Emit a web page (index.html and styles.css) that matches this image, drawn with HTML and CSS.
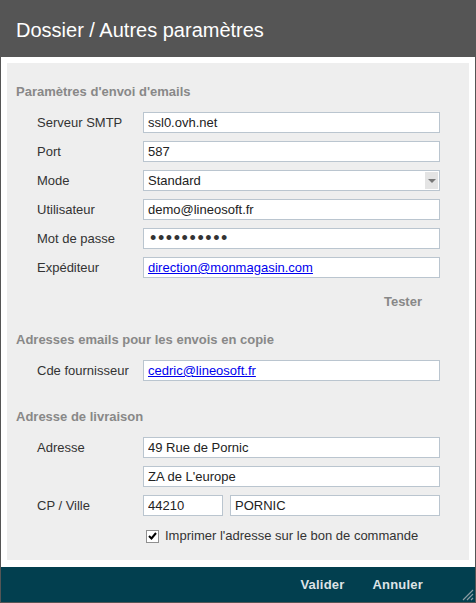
FILE: index.html
```html
<!DOCTYPE html>
<html lang="fr">
<head>
    <meta charset="UTF-8">
    <meta name="viewport" content="width=device-width, initial-scale=1.0">
    <title>Dossier / Autres paramètres</title>
    <link rel="stylesheet" href="styles.css">
</head>
<body>
    <div class="window">
        <h1 class="title">Dossier / Autres paramètres</h1>

        <div class="content">
            <div class="panel">
                <h2 class="section first">Paramètres d'envoi d'emails</h2>
                <div class="rows">
                    <div class="row">
                        <label>Serveur SMTP</label>
                        <input type="text" value="ssl0.ovh.net">
                    </div>
                    <div class="row">
                        <label>Port</label>
                        <input type="text" value="587">
                    </div>
                    <div class="row">
                        <label>Mode</label>
                        <div class="select-wrap">
                            <select>
                                <option>Standard</option>
                                <option>SSL</option>
                                <option>TLS</option>
                            </select>
                            <span class="arrow"></span>
                        </div>
                    </div>
                    <div class="row">
                        <label>Utilisateur</label>
                        <input type="text" value="demo@lineosoft.fr">
                    </div>
                    <div class="row">
                        <label>Mot de passe</label>
                        <input type="password" class="password" value="motdepasse">
                    </div>
                    <div class="row">
                        <label>Expéditeur</label>
                        <input type="text" class="link" value="direction@monmagasin.com">
                    </div>
                </div>
                <div class="test-row">
                    <a class="tester">Tester</a>
                </div>

                <h2 class="section">Adresses emails pour les envois en copie</h2>
                <div class="rows">
                    <div class="row">
                        <label>Cde fournisseur</label>
                        <input type="text" class="link" value="cedric@lineosoft.fr">
                    </div>
                </div>

                <h2 class="section third">Adresse de livraison</h2>
                <div class="rows">
                    <div class="row">
                        <label>Adresse</label>
                        <input type="text" value="49 Rue de Pornic">
                    </div>
                    <div class="row">
                        <label></label>
                        <input type="text" value="ZA de L'europe">
                    </div>
                    <div class="row">
                        <label>CP / Ville</label>
                        <div class="split">
                            <input type="text" class="cp" value="44210">
                            <input type="text" value="PORNIC">
                        </div>
                    </div>
                </div>
                <div class="check-row">
                    <label class="check">
                        <span class="box">
                            <svg width="9" height="8" viewBox="0 0 9 8">
                                <path d="M1 4 L3.5 6.5 L8 1" fill="none" stroke="#000" stroke-width="2"/>
                            </svg>
                        </span>
                        Imprimer l'adresse sur le bon de commande
                    </label>
                </div>
            </div>
        </div>

        <div class="footer">
            <a class="btn">Valider</a>
            <a class="btn">Annuler</a>
            <svg class="grip" width="12" height="12" viewBox="0 0 12 12">
                <path d="M11 1 L1 11 M11 5 L5 11 M11 9 L9 11" stroke="#8a9aa2" stroke-width="1.2"/>
            </svg>
        </div>
    </div>
</body>
</html>
```

FILE: styles.css
```css
body {
    margin: 0;
    padding: 0;
    font-family: "Liberation Sans", Arial, sans-serif;
    font-size: 13px;
    color: #333;
    background-color: #fff;
}
.window {
    width: 474px;
    height: 601px;
    border: 1px solid #555;
    display: flex;
    flex-direction: column;
    background-color: #fff;
}
.title {
    margin: 0;
    height: 56px;
    line-height: 58px;
    padding-left: 15px;
    background-color: #555;
    color: #fff;
    font-size: 20px;
    font-weight: normal;
}
.content {
    flex: 1;
    padding: 6px 6px 7px 6px;
}
.panel {
    height: 100%;
    box-sizing: border-box;
    background-color: #eee;
    padding: 19px 29px 0 9px;
}
.section {
    margin: 18px 0 10px 0;
    font-size: 13px;
    line-height: 20px;
    font-weight: bold;
    color: #888;
}
.section.first {
    margin-top: 0;
}
.section.third {
    margin-top: 26px;
}
.rows {
    display: flex;
    flex-direction: column;
    gap: 8px;
    padding-left: 21px;
}
.row {
    display: flex;
    align-items: center;
    height: 21px;
}
.row label {
    width: 106px;
    flex: none;
    color: #333;
}
.row input, .select-wrap {
    flex: 1;
    min-width: 0;
}
input {
    box-sizing: border-box;
    height: 21px;
    margin: 0;
    padding: 0 4px;
    border: 1px solid #bac5cf;
    background-color: #fff;
    font-family: "Liberation Sans", Arial, sans-serif;
    font-size: 13px;
    color: #222;
    outline: none;
}
input.link {
    color: #0000ee;
    text-decoration: underline;
}
input.password {
    font-size: 18px;
    letter-spacing: 1.6px;
    padding-left: 6px;
    color: #333;
}
.select-wrap {
    position: relative;
    height: 21px;
}
.select-wrap select {
    width: 100%;
    height: 21px;
    box-sizing: border-box;
    margin: 0;
    padding: 0 4px;
    border: 1px solid #bac5cf;
    border-radius: 0;
    background-color: #fff;
    font-family: "Liberation Sans", Arial, sans-serif;
    font-size: 13px;
    color: #222;
    appearance: none;
    -webkit-appearance: none;
    outline: none;
}
.select-wrap .arrow {
    position: absolute;
    top: 2px;
    right: 2px;
    width: 13px;
    height: 17px;
    background-color: #e4e4e4;
}
.select-wrap .arrow::after {
    content: "";
    position: absolute;
    left: 3px;
    top: 7px;
    border-left: 4px solid transparent;
    border-right: 4px solid transparent;
    border-top: 4px solid #777;
}
.split {
    flex: 1;
    display: flex;
    gap: 7px;
}
.split input {
    flex: 1;
    min-width: 0;
}
.split input.cp {
    flex: none;
    width: 80px;
}
.test-row {
    display: flex;
    justify-content: flex-end;
    margin-top: 14px;
    line-height: 20px;
    padding-right: 18px;
}
.tester {
    font-weight: bold;
    color: #888;
    cursor: pointer;
}
.check-row {
    margin-top: 10px;
    padding-left: 130px;
    line-height: 20px;
}
.check {
    display: flex;
    align-items: center;
    gap: 6px;
    color: #333;
}
.box {
    box-sizing: border-box;
    width: 13px;
    height: 13px;
    border: 1px solid #8f8f8f;
    background-color: #fff;
    display: flex;
    align-items: center;
    justify-content: center;
}
.footer {
    position: relative;
    height: 35px;
    background-color: #023f4f;
    display: flex;
    align-items: center;
    justify-content: flex-end;
    gap: 28px;
    padding-right: 52px;
}
.btn {
    font-weight: bold;
    font-size: 13px;
    color: #dde3e6;
    letter-spacing: 0.2px;
    cursor: pointer;
}
.grip {
    position: absolute;
    right: 1px;
    bottom: 1px;
}
```
